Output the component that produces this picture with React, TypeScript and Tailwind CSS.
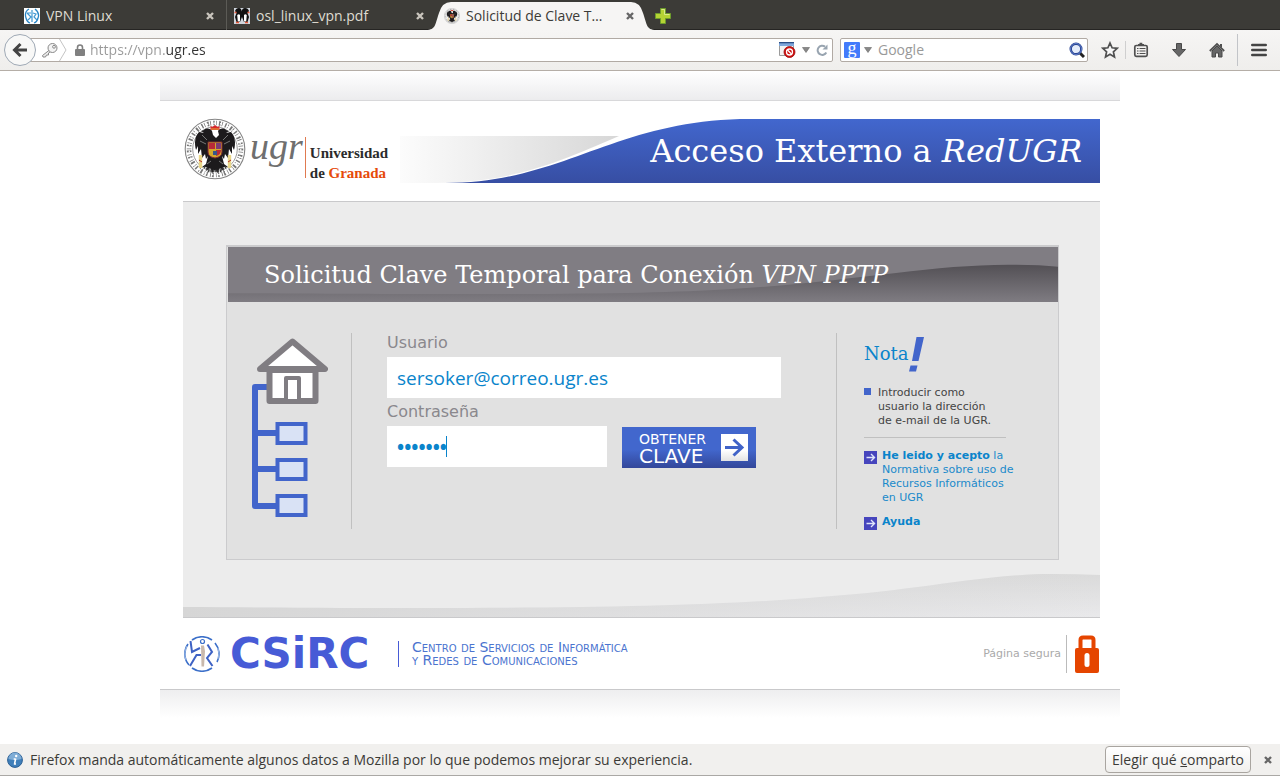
import type { ReactNode } from "react";

const UI = "font-['Open_Sans','Noto_Sans',sans-serif]";

function CrossIcon({ className }: { className?: string }) {
  return (
    <svg viewBox="0 0 8 8" className={"h-2 w-2 " + (className ?? "")} aria-hidden="true">
      <path d="M1 1L7 7M7 1L1 7" stroke="currentColor" strokeWidth="2.4" />
    </svg>
  );
}

function UniversitySeal({ className }: { className?: string }) {
  return (
    <svg viewBox="0 0 62 62" className={className} aria-hidden="true">
      <circle cx="31" cy="31" r="29.8" fill="#fff" stroke="#858585" strokeWidth="1.1" />
      <circle cx="31" cy="31" r="26" fill="none" stroke="#777" strokeWidth="4.6" strokeDasharray="1.4 1.5 .7 2.2 1.8 1.2 .8 2.4" />
      <circle cx="31" cy="31" r="25.8" fill="none" stroke="#fff" strokeWidth="1.2" strokeDasharray="2 5" />
      <circle cx="31" cy="31" r="22.3" fill="none" stroke="#909090" strokeWidth=".9" />
      <path d="M28 13c-2-3-6-3-8-1l-3 1 3 2-5-1c-4 4-5 11-3 18l2-4 0 8 3-5 1 9 3-4 1 5 2-3-2 8-4 3 5 0-1 4 4-3 2 5 3-3 3 3 2-5 4 3-1-4 5 0-4-3-2-8 2 3 1-5 3 4 1-9 3 5 0-8 2 4c2-7 1-14-3-18l-5 1 3-2-3-1c-2-2-6-2-8 1l1 4-3 3-3-3z" fill="#1c1a1c" />
      <path d="M18 17l5 5M16 23l6 3M44 17l-5 5M46 23l-6 3M23 46l4-3M39 46l-4-3" stroke="#777" strokeWidth="1" />
      <path d="M26.500 8l2 1 2.500-2 2.500 2 2-1v4h-9z" fill="#d7262b" />
      <path d="M27 11h8" stroke="#e5b33a" />
      <path d="M24 24h14v10q0 5-7 6-7-1-7-6z" fill="#d5a72c" stroke="#7b2633" strokeWidth="1" />
      <path d="M25 25h6v6h-6zM32 32h5q0 5-5 6z" fill="#b82a38" />
      <path d="M32 25h5v6h-5z" fill="#7e3c75" />
      <path d="M29 33h4v4h-4z" fill="#38558b" />
      <path d="M16.500 37v13M45.500 37v13" stroke="#e9d78a" strokeWidth="3.400" />
      <path d="M15 42l3 2M44 44l3-2" stroke="#b32626" strokeWidth="1" />
      <path d="M20 49l6 3M42 49l-6 3M24 53h14" stroke="#444" strokeWidth="2.400" strokeDasharray="1.400 1" />
    </svg>
  );
}

function RunnerMark({ className }: { className?: string }) {
  return (
    <svg viewBox="0 0 36 36" className={className} fill="none" aria-hidden="true">
      <path d="M8 4A17 17 0 0 1 28 4M31 7a17 17 0 0 1 2 19M28 32a17 17 0 0 1-20 0M5 29A17 17 0 0 1 4 8" stroke="#3b6fc9" strokeWidth="1.600" />
      <path d="M3 10a17 17 0 0 0-1 14M34 12a17 17 0 0 1 0 11" stroke="#9ebbe6" strokeWidth="1" />
      <circle cx="18.500" cy="5.500" r="2" stroke="#3b6fc9" strokeWidth="1.200" />
      <path d="M6.500 5l1.500 11 8-4M23.500 8.500l4.500 7.500-5 6 5.500 8M17 19H12.500L6 30" stroke="#3e62c4" strokeWidth="2" />
      <path d="M17 9.500h3l1 6-1 15h-2.500z" fill="#c9b9ac" />
    </svg>
  );
}

function RunnerFavicon() {
  return (
    <span className="block h-4 w-4 shrink-0 overflow-hidden bg-white">
      <svg viewBox="0 0 16 16" className="h-4 w-4" fill="none" aria-hidden="true">
        <path d="M5 1Q0 4 2 10q1 4 4 5M11 1q5 4 3 9-1 4-4 5" stroke="#2b86c5" strokeWidth="1.300" />
        <path d="M3 5l4 0M3 5l4 4-3 3M8 2v12M9 5l3 1-2 3 3 3" stroke="#3f97d1" strokeWidth="1.200" />
      </svg>
    </span>
  );
}

function PenguinFavicon() {
  return (
    <svg viewBox="0 0 16 16" className="h-4 w-4 shrink-0" aria-hidden="true">
      <path d="M0 0h16v16H0z" fill="#d0d5dc" />
      <path d="M1 3q1-3 4-3 2.500 0 2.700 3.500Q8 0 11 0q3 0 4 3l-1.500 2L15 9l-1.500 5H10L8 9l-2 5H2.500L1 9l1.500-4z" fill="#111" />
      <path d="M3.200 7q1.800-1.500 2.800 0v6.500H3.800zM10 7q1.200-1.500 2.800 0l-.6 6.500H10z" fill="#fff" />
      <path d="M.5 4.500h2M13.500 4.500h2M2 14.500h3M11 14.500h3" stroke="#e65a3b" strokeWidth="1.300" />
    </svg>
  );
}

function Tab({ icon, label, active }: { icon: ReactNode; label: string; active?: boolean }) {
  return (
    <div
      role="tab"
      aria-selected={!!active}
      className={"relative flex h-[30px] w-[210px] items-center pt-0.5 " + (active ? "text-[#3c3b37]" : "text-[#dfdbd2]")}
    >
      {active && (
        <svg viewBox="0 0 230 30" className="absolute top-0 -left-2.5 h-[30px] w-[230px]" preserveAspectRatio="none" aria-hidden="true">
          <path d="M0 30C10 30 9 24 13 13Q16 2 25 2H205Q214 2 217 13C221 24 220 30 230 30Z" fill="#f6f5f4" />
        </svg>
      )}
      <div className="relative flex w-full items-center gap-1.5 pl-2">
        {icon}
        <span className="flex-1 truncate text-sm leading-5">{label}</span>
        <button aria-label={"Cerrar " + label} className={"mr-3 " + (active ? "text-[#666]" : "text-[#c9c5bd]")}>
          <CrossIcon />
        </button>
      </div>
    </div>
  );
}

function TabBar() {
  return (
    <div role="tablist" className="flex h-[30px] items-center bg-[#3c3b37] pl-4 shadow-[inset_0_-1px_0_#262523]">
      <Tab icon={<RunnerFavicon />} label="VPN Linux" />
      <div className="-mr-px h-full w-px bg-[#5c5b56]" />
      <Tab icon={<PenguinFavicon />} label="osl_linux_vpn.pdf" />
      <Tab icon={<UniversitySeal className="h-4 w-4 shrink-0" />} label="Solicitud de Clave T…" active />
      <button aria-label="Nueva pestaña" className="ml-2 pt-0.5">
        <svg viewBox="0 0 18 18" className="h-[18px] w-[18px]" aria-hidden="true">
          <path d="M6.500 1.500h5v5h5v5h-5v5h-5v-5h-5v-5h5z" fill="#b5d334" stroke="#6d9c2c" />
          <path d="M7.500 2.500h3v5h5" fill="none" stroke="#dbea8b" />
        </svg>
      </button>
    </div>
  );
}

function DropArrow() {
  return (
    <svg viewBox="0 0 8 6" className="h-1.5 w-2" aria-hidden="true">
      <path d="M.5 .5h7L4 5.500z" fill="#888" stroke="#666" strokeWidth=".6" />
    </svg>
  );
}

function Toolbar() {
  return (
    <div className="flex h-[41px] items-center border-b border-[#b5aea7] bg-linear-to-b from-[#f6f5f4] to-[#efeeec] pl-1">
      <button aria-label="Atrás" className="relative z-10 flex h-8 w-8 shrink-0 items-center justify-center rounded-full border border-[#9fa9b5] bg-[#f8f8f7]">
        <svg viewBox="0 0 16 16" className="h-4 w-4" fill="none" stroke="#444" strokeWidth="3" aria-hidden="true">
          <path d="M8.500 2L2.500 8l6 6M3 8h12" />
        </svg>
      </button>
      <div className="-ml-4 flex h-6 flex-1 items-center rounded-[2px] border border-[#b1aaa4] bg-white pl-[18px]">
        <svg viewBox="0 0 18 16" className="ml-0.5 h-4 w-[18px]" fill="none" aria-hidden="true">
          <path d="M8.500 8L1.500 13.500l.5 1.500h2.500l1-2h2v-2l3-2" fill="#eee" stroke="#888" strokeWidth="1" />
          <circle cx="11.500" cy="6" r="4.500" fill="#f4f4f4" stroke="#888" />
          <circle cx="13" cy="4.800" r="1.400" fill="#fff" stroke="#888" />
        </svg>
        <svg viewBox="0 0 8 22" className="h-[22px] w-2" fill="none" aria-hidden="true">
          <path d="M.5 0L7 11 .5 22" stroke="#c4c4c4" />
        </svg>
        <svg viewBox="0 0 10 12" className="ml-2 h-3 w-2.5" aria-hidden="true">
          <path d="M2.500 6V3.500a2.500 2.500 0 0 1 5 0V6" fill="none" stroke="#808080" strokeWidth="1.600" />
          <rect x="0" y="5" width="10" height="7" rx="1" fill="#808080" />
        </svg>
        <input
          aria-label="Dirección"
          defaultValue="https://vpn.ugr.es"
          className="ml-[5px] h-5 min-w-0 flex-1 bg-[linear-gradient(90deg,#999_75px,#333_75px)] bg-clip-text text-sm leading-5 text-transparent outline-none"
        />
        <svg viewBox="0 0 17 16" className="h-4 w-[17px]" aria-hidden="true">
          <path d="M.5 .5h14v13H.5z" fill="#f3f3f3" stroke="#9b9b9b" />
          <path d="M0 0h15v4H0z" fill="#7fa8dc" />
          <path d="M0 0h15v1.300H0z" fill="#2c4f87" />
          <circle cx="10.500" cy="10" r="5.500" fill="#cf1010" stroke="#9c0c0c" strokeWidth=".8" />
          <circle cx="10.500" cy="10" r="3" fill="none" stroke="#fff" strokeWidth="1.300" />
          <path d="M8.500 8l4 4" stroke="#fff" strokeWidth="1.300" />
        </svg>
        <span className="ml-1.5"><DropArrow /></span>
        <button aria-label="Recargar" className="mr-1 ml-1.5">
          <svg viewBox="0 0 12 12" className="h-3 w-3" fill="none" aria-hidden="true">
            <path d="M10.300 8.500A4.600 4.600 0 1 1 9 2.600" stroke="#98a4b0" strokeWidth="2" />
            <path d="M11.500 .5V5.500H6.500z" fill="#98a4b0" />
          </svg>
        </button>
      </div>
      <div className="ml-[7px] flex h-6 w-[248px] shrink-0 items-center rounded-[2px] border border-[#b1aaa4] bg-white pr-0.5 pl-[3px]">
        <span className="flex h-4 w-4 items-center justify-center rounded-[1px] bg-[#437bfb] pb-1 font-['Liberation_Serif',serif] text-lg leading-4 text-white">g</span>
        <span className="ml-1"><DropArrow /></span>
        <input aria-label="Buscar con Google" placeholder="Google" className="ml-1.5 h-5 min-w-0 flex-1 text-sm leading-5 outline-none placeholder:text-[#999]" />
        <button aria-label="Buscar">
          <svg viewBox="0 0 16 16" className="h-4 w-4" fill="none" aria-hidden="true">
            <path d="M10.500 10.500l4.500 4.500" stroke="#222" strokeWidth="3" />
            <circle cx="7" cy="7" r="5.300" fill="#e4ecfa" stroke="#243f8f" strokeWidth="2.400" />
            <circle cx="7" cy="7" r="5.500" stroke="#7c9be0" strokeWidth=".7" />
          </svg>
        </button>
      </div>
      <div className="flex h-full shrink-0 items-center text-[#505050]">
        <button aria-label="Añadir a marcadores" className="ml-[13px]">
          <svg viewBox="0 0 18 18" className="h-[18px] w-[18px]" fill="#f7f7f7" stroke="currentColor" strokeWidth="1.700" aria-hidden="true">
            <path d="M9 2l2.100 4.800 5.100.5-3.800 3.500 1.100 5.200L9 13.300 4.500 16l1.100-5.200-3.800-3.500 5.100-.5z" />
          </svg>
        </button>
        <span className="ml-1.5 h-[18px] w-px bg-[#cfcfcf]" />
        <button aria-label="Mostrar marcadores" className="ml-[7px]">
          <svg viewBox="0 0 16 16" className="h-4 w-4" fill="none" stroke="currentColor" aria-hidden="true">
            <rect x="1.800" y="3.500" width="12.400" height="10.800" rx="1.500" strokeWidth="1.700" />
            <path d="M5 4V2h1.500V.8h2.800V2H11v2z" fill="currentColor" stroke="none" />
            <path d="M6.500 6.500H12.500M6.500 9H12.500M6.500 11.500H12.500M4 6.500h1.500M4 9h1.500M4 11.500h1.500" strokeWidth="1.200" />
          </svg>
        </button>
        <button aria-label="Descargas" className="ml-[22px]">
          <svg viewBox="0 0 16 16" className="h-4 w-4" fill="#666" stroke="#484848" aria-hidden="true">
            <path d="M5.500 1.500h5V7.500h4L8 14.500 1.500 7.500h4z" />
          </svg>
        </button>
        <button aria-label="Inicio" className="ml-[22px]">
          <svg viewBox="0 0 16 16" className="h-4 w-4" aria-hidden="true">
            <path d="M3 9l5-5 5 5v6H9.500v-4h-3v4H3z" fill="#666" stroke="#484848" />
            <path d="M.8 9L8 2l7.200 7" fill="none" stroke="#505050" strokeWidth="1.800" />
            <path d="M11 2h2v4l-2-2z" fill="#505050" />
          </svg>
        </button>
        <span className="ml-3 h-8 w-px bg-[#c2c4c8]" />
        <button aria-label="Menú" className="mr-[13px] ml-[13px]">
          <svg viewBox="0 0 16 14" className="h-3.5 w-4" stroke="#444" strokeWidth="2.600" strokeLinecap="round" aria-hidden="true">
            <path d="M1.300 2h13.400M1.300 7h13.400M1.300 12h13.400" />
          </svg>
        </button>
      </div>
    </div>
  );
}

function SiteHeader() {
  return (
    <header className="flex items-start pt-[17px] pr-5 pb-[18px] pl-6">
      <a href="#ugr" className="flex w-[216px] shrink-0 items-start">
        <UniversitySeal className="h-[62px] w-[62px] shrink-0" />
        <span className="ml-1 pt-2 font-['Liberation_Serif',serif] text-[38px] leading-10 text-[#6f6f6f] italic">ugr</span>
        <span className="mt-[19px] ml-0.5 h-[41px] border-l border-[#e07a50] pt-1.5 pl-1 font-['Liberation_Serif',serif] text-[15px] leading-5 font-bold text-[#2b2b2b]">
          Universidad
          <br />
          de <span className="text-[#e64a0a]">Granada</span>
        </span>
      </a>
      <div className="relative flex h-[65px] flex-1 items-center justify-end">
        <svg viewBox="0 0 700 65" preserveAspectRatio="none" className="absolute inset-0 h-full w-full" aria-hidden="true">
          <defs>
            <linearGradient id="bannerBlue" x1="0" y1="0" x2="0" y2="1">
              <stop offset="0" stopColor="#4267ce" />
              <stop offset="1" stopColor="#374ea3" />
            </linearGradient>
            <linearGradient id="bannerGray" x1="0" y1="0" x2="1" y2="0">
              <stop offset="0" stopColor="#fcfcfc" />
              <stop offset="1" stopColor="#d7d7d7" />
            </linearGradient>
          </defs>
          <path d="M0 18H219C150 48 110 64 35 65H0Z" fill="url(#bannerGray)" />
          <path d="M45 65C165 65 215 1 350 1H700V65Z" fill="url(#bannerBlue)" />
        </svg>
        <h1 className="relative pr-[18px] font-['DejaVu_Serif',serif] text-[32px] leading-10 text-white">
          Acceso Externo a <em>RedUGR</em>
        </h1>
      </div>
    </header>
  );
}

function NetworkHouse() {
  return (
    <svg viewBox="0 0 76 180" className="h-[180px] w-[76px]" fill="none" aria-hidden="true">
      <path d="M20 49H3V168H25M3 95H25M3 131H25" stroke="#4265cb" strokeWidth="6" strokeLinejoin="round" />
      <g fill="#d9e2f5" stroke="#4265cb" strokeWidth="4">
        <rect x="25.500" y="86" width="28" height="19" />
        <rect x="25.500" y="122" width="28" height="19" />
        <rect x="25.500" y="158" width="28" height="19" />
      </g>
      <g stroke="#807d82" strokeLinejoin="round">
        <path d="M17.500 32h46v31h-46z" fill="#fff" strokeWidth="6" />
        <path d="M8 31L40.500 3.500 73 31z" fill="#fff" strokeWidth="6" />
        <path d="M34 61V40h13v21" fill="#fff" strokeWidth="4" />
      </g>
    </svg>
  );
}

function LinkBullet() {
  return (
    <svg viewBox="0 0 13 13" className="mt-0.5 -mb-0.5 h-[13px] w-[13px] shrink-0" fill="none" aria-hidden="true">
      <path d="M0 0h13v13H0z" fill="#4645bd" />
      <path d="M2.500 6.500h8M7 3l3.500 3.500L7 10" stroke="#dfe4fa" strokeWidth="1.400" />
    </svg>
  );
}

function RequestPanel() {
  return (
    <section className="mr-[41px] ml-[43px] border border-t-2 border-[#cbcbcd] bg-[#e1e1e1]">
      <div className="relative ml-px h-[55px]">
        <svg viewBox="0 0 830 56" preserveAspectRatio="none" className="absolute inset-0 h-full w-full" aria-hidden="true">
          <defs>
            <linearGradient id="titleWave" gradientUnits="userSpaceOnUse" x1="0" y1="19" x2="0" y2="56">
              <stop offset="0" stopColor="#545156" />
              <stop offset="1" stopColor="#7f7c82" />
            </linearGradient>
          </defs>
          <path d="M0 0H830V56H0Z" fill="#807d83" />
          <path d="M0 47C300 49 420 48 500 43C620 36 700 18 780 18Q810 18 830 20V56H0Z" fill="url(#titleWave)" />
        </svg>
        <h2 className="relative pt-2 pl-9 font-['DejaVu_Serif',serif] text-2xl leading-10 text-white">
          Solicitud Clave Temporal para Conexión <em>VPN PPTP</em>
        </h2>
      </div>
      <div className="flex pt-[31px] pb-[30px] pl-[25px] text-[11px] leading-[14px]">
        <div className="w-[100px] shrink-0 border-r border-[#c0c0c0] pt-[5px]">
          <NetworkHouse />
        </div>
        <form className="flex-1 pr-[55px] pl-[35px]" onSubmit={(e) => e.preventDefault()}>
          <label htmlFor="user" className="block text-base leading-5 text-[#8a888d]">Usuario</label>
          <input
            id="user"
            defaultValue="sersoker@correo.ugr.es"
            className="mt-1 block h-[41px] w-full bg-white px-2.5 font-['Open_Sans','Noto_Sans',sans-serif] text-[19px] leading-6 text-[#0a84cb] outline-none"
          />
          <label htmlFor="password" className="mt-1 block text-base leading-5 text-[#8a888d]">Contraseña</label>
          <div className="mt-1 flex items-start">
            <div className="relative w-[220px]">
              <input
                id="password"
                type="password"
                defaultValue="sersoke"
                className="block h-[41px] w-full bg-white px-2.5 font-['Open_Sans','Noto_Sans',sans-serif] text-[19px] leading-6 font-bold text-[#0a84cb] outline-none"
              />
              <span className="absolute top-[10px] left-[59px] h-[21px] w-px bg-[#0a84cb]" />
            </div>
            <button className="mt-px ml-[15px] flex h-[41px] w-[134px] items-center justify-between bg-linear-to-b from-[#4267cd] from-55% to-[#33479a] pr-2 pl-[17px] text-left text-white">
              <span>
                <span className="block text-sm leading-4">OBTENER</span>
                <span className="block text-xl leading-[18px]">CLAVE</span>
              </span>
              <svg viewBox="0 0 27 27" className="h-[27px] w-[27px]" fill="none" aria-hidden="true">
                <defs>
                  <linearGradient id="arrowTile" x1="0" y1="0" x2="0" y2="1">
                    <stop offset="0.600" stopColor="#fff" />
                    <stop offset="1" stopColor="#e2e2e2" />
                  </linearGradient>
                </defs>
                <path d="M0 0h27v27H0z" fill="url(#arrowTile)" />
                <path d="M4 13.500h17M12.500 5.500l8.500 8-8.500 8" stroke="#4063c8" strokeWidth="3" />
              </svg>
            </button>
          </div>
        </form>
        <aside className="w-[222px] shrink-0 border-l border-[#c0c0c0] pt-1 pl-[27px]">
          <h3 className="flex items-start font-['DejaVu_Serif',serif] text-lg leading-[34px] text-[#0a84cb]">
            Nota
            <svg viewBox="0 0 16 36" className="h-9 w-4" aria-hidden="true">
              <path d="M7.500 0h7.500L9.500 24H3zM1.500 28.500h7L7 34.500H0z" fill="#4265cb" />
            </svg>
          </h3>
          <p className="mt-[13px] flex gap-[7px] text-[#444]">
            <span className="mt-0.5 h-[7px] w-[7px] shrink-0 bg-[#4265cb]" />
            <span>
              Introducir como
              <br />
              usuario la dirección
              <br />
              de e-mail de la UGR.
            </span>
          </p>
          <div className="mt-[9px] w-[142px] border-t border-[#c0c0c0]" />
          <a href="#normativa" className="mt-[11px] flex gap-[5px] text-[#1a8acb]">
            <LinkBullet />
            <span>
              <b className="text-[#0a84cb]">He leido y acepto</b> la
              <br />
              Normativa sobre uso de
              <br />
              Recursos Informáticos
              <br />
              en UGR
            </span>
          </a>
          <a href="#ayuda" className="mt-2.5 flex gap-[5px] font-bold text-[#0a84cb]">
            <LinkBullet />
            Ayuda
          </a>
        </aside>
      </div>
    </section>
  );
}

function SiteFooter() {
  return (
    <footer className="flex items-center justify-between border-b border-[#c9c9cb] pt-[17px] pr-[21px] pb-4 pl-6">
      <div className="flex items-center">
        <RunnerMark className="h-9 w-9" />
        <span className="ml-2.5 w-[156px] font-['DejaVu_Sans',sans-serif] text-[42px] leading-9 font-bold text-[#475bd6]">CSiRC</span>
        <span className="ml-3 h-[26px] w-px bg-[#475bd6]" />
        <span className="ml-[13px] font-['DejaVu_Sans',sans-serif] text-sm leading-[13px] text-[#4b74cf] [font-variant:small-caps]">
          Centro de Servicios de Informática
          <br />
          y Redes de Comunicaciones
        </span>
      </div>
      <div className="flex items-center text-[11px] leading-[14px] text-[#aaa]">
        Página segura
        <span className="ml-[5px] h-[38px] w-px bg-[#bbb]" />
        <svg viewBox="0 0 24 38" className="ml-2 h-[38px] w-6" aria-hidden="true">
          <path d="M5.500 15V5q0-2.500 2.500-2.500h8q2.500 0 2.500 2.500V15" fill="none" stroke="#e54500" strokeWidth="4" />
          <rect x="0" y="13" width="24" height="25" rx="2" fill="#e54500" />
          <rect x="9.500" y="18" width="5" height="14" rx="2.500" fill="#fff" />
        </svg>
      </div>
    </footer>
  );
}

function NotificationBar() {
  return (
    <div className="flex h-8 items-center border-b border-[#aaa8a5] bg-[#f1f0ee] px-[7px] text-sm text-[#3c3b37]">
      <svg viewBox="0 0 16 16" className="h-4 w-4 shrink-0" aria-hidden="true">
        <circle cx="8" cy="8" r="7.400" fill="#3f7fba" stroke="#2c5f93" />
        <path d="M1.500 7a6.500 6.500 0 0 1 13 0q-6.500 2-13 0z" fill="#7fadd6" />
        <path d="M8.700 6.500L7.500 12M6.700 7h2M6.800 12h2.200" stroke="#fff" strokeWidth="1.600" />
        <circle cx="9.200" cy="4" r="1.200" fill="#fff" />
      </svg>
      <p className="ml-[7px] flex-1 truncate">
        Firefox manda automáticamente algunos datos a Mozilla por lo que podemos mejorar su experiencia.
      </p>
      <button className="h-[27px] w-[146px] rounded border border-[#a9a5a0] bg-linear-to-b from-white to-[#f0efed]">
        Elegir qué <u>c</u>omparto
      </button>
      <button aria-label="Cerrar aviso" className="mr-px ml-[13px] text-[#666]">
        <CrossIcon />
      </button>
    </div>
  );
}

export default function App() {
  return (
    <div className={"flex min-h-screen flex-col bg-white " + UI}>
      <TabBar />
      <Toolbar />
      <main className="mx-auto w-full max-w-[960px] flex-1 font-['DejaVu_Sans',sans-serif]">
        <div className="h-[30px] border-b border-[#d8d8da] bg-linear-to-b from-white to-[#ececee]" />
        <SiteHeader />
        <div className="mr-5 ml-[23px] border-t border-b border-[#c9c9cb] bg-[#ececec] pt-[43px]">
          <RequestPanel />
          <svg viewBox="0 0 917 44" preserveAspectRatio="none" className="mt-[13px] block h-11 w-full" aria-hidden="true">
            <defs>
              <linearGradient id="footWave" x1="0" y1="0" x2="0" y2="1">
                <stop offset="0" stopColor="#dadada" />
                <stop offset="1" stopColor="#e9e9eb" />
              </linearGradient>
              <linearGradient id="footShade" x1="0" y1="0" x2="1" y2="0">
                <stop offset="0" stopColor="#d6d6d6" />
                <stop offset="1" stopColor="#d6d6d6" stopOpacity="0" />
              </linearGradient>
            </defs>
            <path d="M0 34C300 36 500 36 637 24C740 17 800 1 870 1Q895 1 917 2V44H0Z" fill="url(#footWave)" />
            <path d="M0 34C300 36 500 36 637 24C740 17 800 1 870 1Q895 1 917 2V44H0Z" fill="url(#footShade)" />
          </svg>
        </div>
        <SiteFooter />
        <div className="h-7 bg-linear-to-b from-[#eeeeef] to-white" />
      </main>
      <NotificationBar />
    </div>
  );
}
